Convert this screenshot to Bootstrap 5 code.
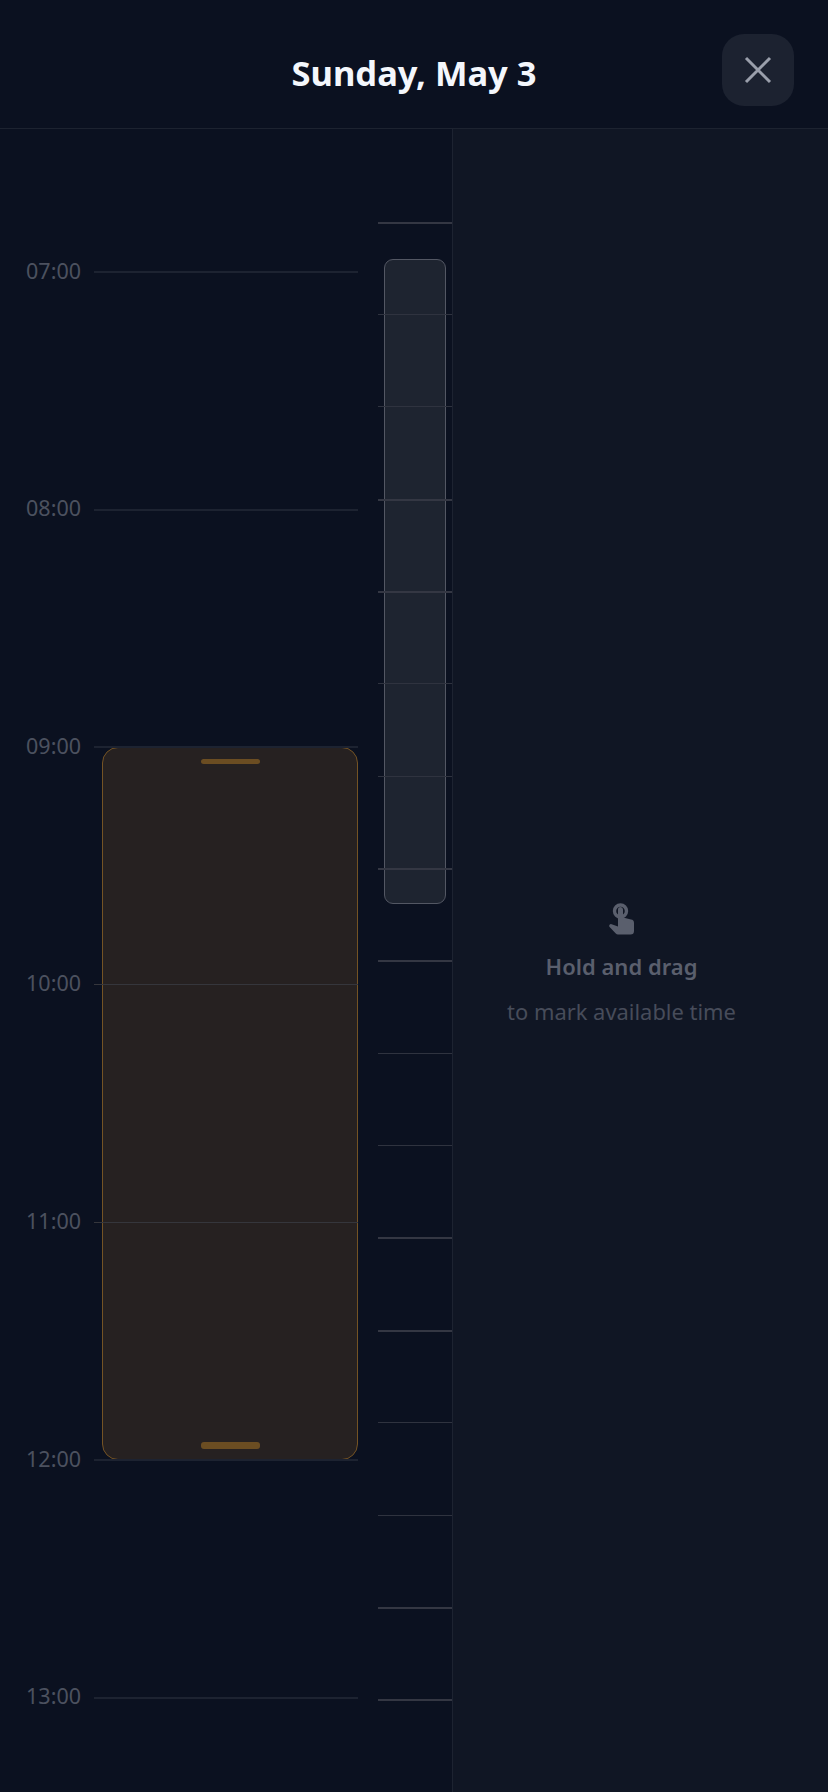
<!DOCTYPE html>
<html>
<head>
  <link href="https://cdn.jsdelivr.net/npm/bootstrap@5.3.0/dist/css/bootstrap.min.css" rel="stylesheet">
  <style>
    body {
      background-color: #0b1120;
      font-family: "Noto Sans", "Open Sans", sans-serif;
      height: 1792px;
      overflow: hidden;
    }

    .day-header {
      height: 129px;
      border-bottom: 1px solid #1d2330;
      padding-left: 34px;
      padding-right: 34px;
    }

    .header-spacer {
      width: 72px;
    }

    .day-title {
      font-size: 34.5px;
      font-weight: 700;
      color: #f4f7fc;
      line-height: 1;
      margin: 18px 0 0 0;
    }

    .close-btn {
      width: 72px;
      height: 72px;
      border: 0;
      border-radius: 22px;
      background-color: #1c2230;
      margin-top: 12px;
    }

    .day-body {
      height: 1663px;
    }

    .hours-col {
      width: 378px;
      padding-top: 127px;
      padding-right: 20px;
      gap: 205.67px;
    }

    .hour-row {
      height: 32px;
    }

    .hour-label {
      width: 94px;
      padding-right: 13px;
      text-align: right;
      font-size: 21.5px;
      line-height: 32px;
      color: #4c515f;
      margin-top: -3px;
    }

    .hour-line {
      flex: 1;
      height: 2px;
      background-color: #1d2331;
      z-index: 1;
    }

    .hour-line.over-block {
      height: 1px;
      background-color: #35363c;
    }

    .amber-block {
      left: 102px;
      top: 618px;
      width: 256px;
      height: 713px;
      background-color: #262121;
      border: 1px solid #745324;
      border-radius: 16px;
    }

    .amber-handle {
      width: 59px;
      background-color: #6b4d22;
      border-radius: 3px;
    }

    .amber-handle.top-handle {
      height: 5px;
      margin-top: 11px;
    }

    .amber-handle.bottom-handle {
      height: 7px;
      margin-bottom: 10px;
    }

    .ticks-col {
      width: 75px;
      padding-top: 92.5px;
      border-right: 1px solid #1d2331;
    }

    .tick-row {
      height: 92.36px;
      flex: none;
      border-top: 1px solid #2f333f;
      z-index: 1;
    }

    .tick-row.thick {
      border-top: 2px solid #343743;
    }

    .slot-block {
      left: 6px;
      top: 130px;
      width: 62px;
      height: 645px;
      background-color: #1e2430;
      border: 1px solid #535763;
      border-radius: 9px;
    }

    .hint-panel {
      flex: 1;
      background-color: #101624;
      padding-top: 774px;
      padding-right: 38px;
    }

    .hint-title {
      font-size: 22px;
      font-weight: 600;
      line-height: 30px;
      color: #5a5f6d;
      margin-top: 15px;
    }

    .hint-text {
      font-size: 21.9px;
      line-height: 30px;
      color: #474c5a;
      margin-top: 16px;
    }
  </style>
</head>
<body>

<div class="day-header d-flex align-items-center justify-content-between">
  <div class="header-spacer"></div>
  <h1 class="day-title">Sunday, May 3</h1>
  <button class="close-btn d-flex align-items-center justify-content-center p-0" type="button" aria-label="Close">
    <svg width="28" height="28" viewBox="0 0 28 28" fill="none" stroke="#9a9fab" stroke-width="3">
      <path d="M2 2 L26 26 M26 2 L2 26"/>
    </svg>
  </button>
</div>

<div class="day-body d-flex">
  <div class="hours-col d-flex flex-column position-relative">
    <div class="hour-row d-flex align-items-center"><span class="hour-label">07:00</span><div class="hour-line"></div></div>
    <div class="hour-row d-flex align-items-center"><span class="hour-label">08:00</span><div class="hour-line"></div></div>
    <div class="hour-row d-flex align-items-center"><span class="hour-label">09:00</span><div class="hour-line"></div></div>
    <div class="hour-row d-flex align-items-center"><span class="hour-label">10:00</span><div class="hour-line over-block position-relative"></div></div>
    <div class="hour-row d-flex align-items-center"><span class="hour-label">11:00</span><div class="hour-line over-block position-relative"></div></div>
    <div class="hour-row d-flex align-items-center"><span class="hour-label">12:00</span><div class="hour-line"></div></div>
    <div class="hour-row d-flex align-items-center"><span class="hour-label">13:00</span><div class="hour-line"></div></div>

    <div class="amber-block position-absolute d-flex flex-column align-items-center justify-content-between">
      <div class="amber-handle top-handle"></div>
      <div class="amber-handle bottom-handle"></div>
    </div>
  </div>

  <div class="ticks-col d-flex flex-column position-relative">
    <div class="tick-row thick"></div>
    <div class="tick-row position-relative"></div>
    <div class="tick-row position-relative"></div>
    <div class="tick-row thick position-relative"></div>
    <div class="tick-row thick position-relative"></div>
    <div class="tick-row position-relative"></div>
    <div class="tick-row position-relative"></div>
    <div class="tick-row thick position-relative"></div>
    <div class="tick-row thick"></div>
    <div class="tick-row"></div>
    <div class="tick-row"></div>
    <div class="tick-row thick"></div>
    <div class="tick-row thick"></div>
    <div class="tick-row"></div>
    <div class="tick-row"></div>
    <div class="tick-row thick"></div>
    <div class="tick-row thick"></div>

    <div class="slot-block position-absolute"></div>
  </div>

  <div class="hint-panel d-flex flex-column align-items-center">
    <svg width="26" height="33" viewBox="0 0 26 33" fill="#5a5f6d">
      <circle cx="11.5" cy="8" r="6" fill="none" stroke="#5a5f6d" stroke-width="3.4"/>
      <path d="M9 6.5 a2.5 2.5 0 0 1 5 0 V14.5 l8 2 a3.5 3.5 0 0 1 3 3.4 V28 a3.5 3.5 0 0 1 -3.5 3.5 H9 a3 3 0 0 1 -2.2 -1 L0.6 24 a1.8 1.8 0 0 1 2 -2.8 L9 23.5 Z"/>
    </svg>
    <div class="hint-title">Hold and drag</div>
    <div class="hint-text">to mark available time</div>
  </div>
</div>

</body>
</html>
